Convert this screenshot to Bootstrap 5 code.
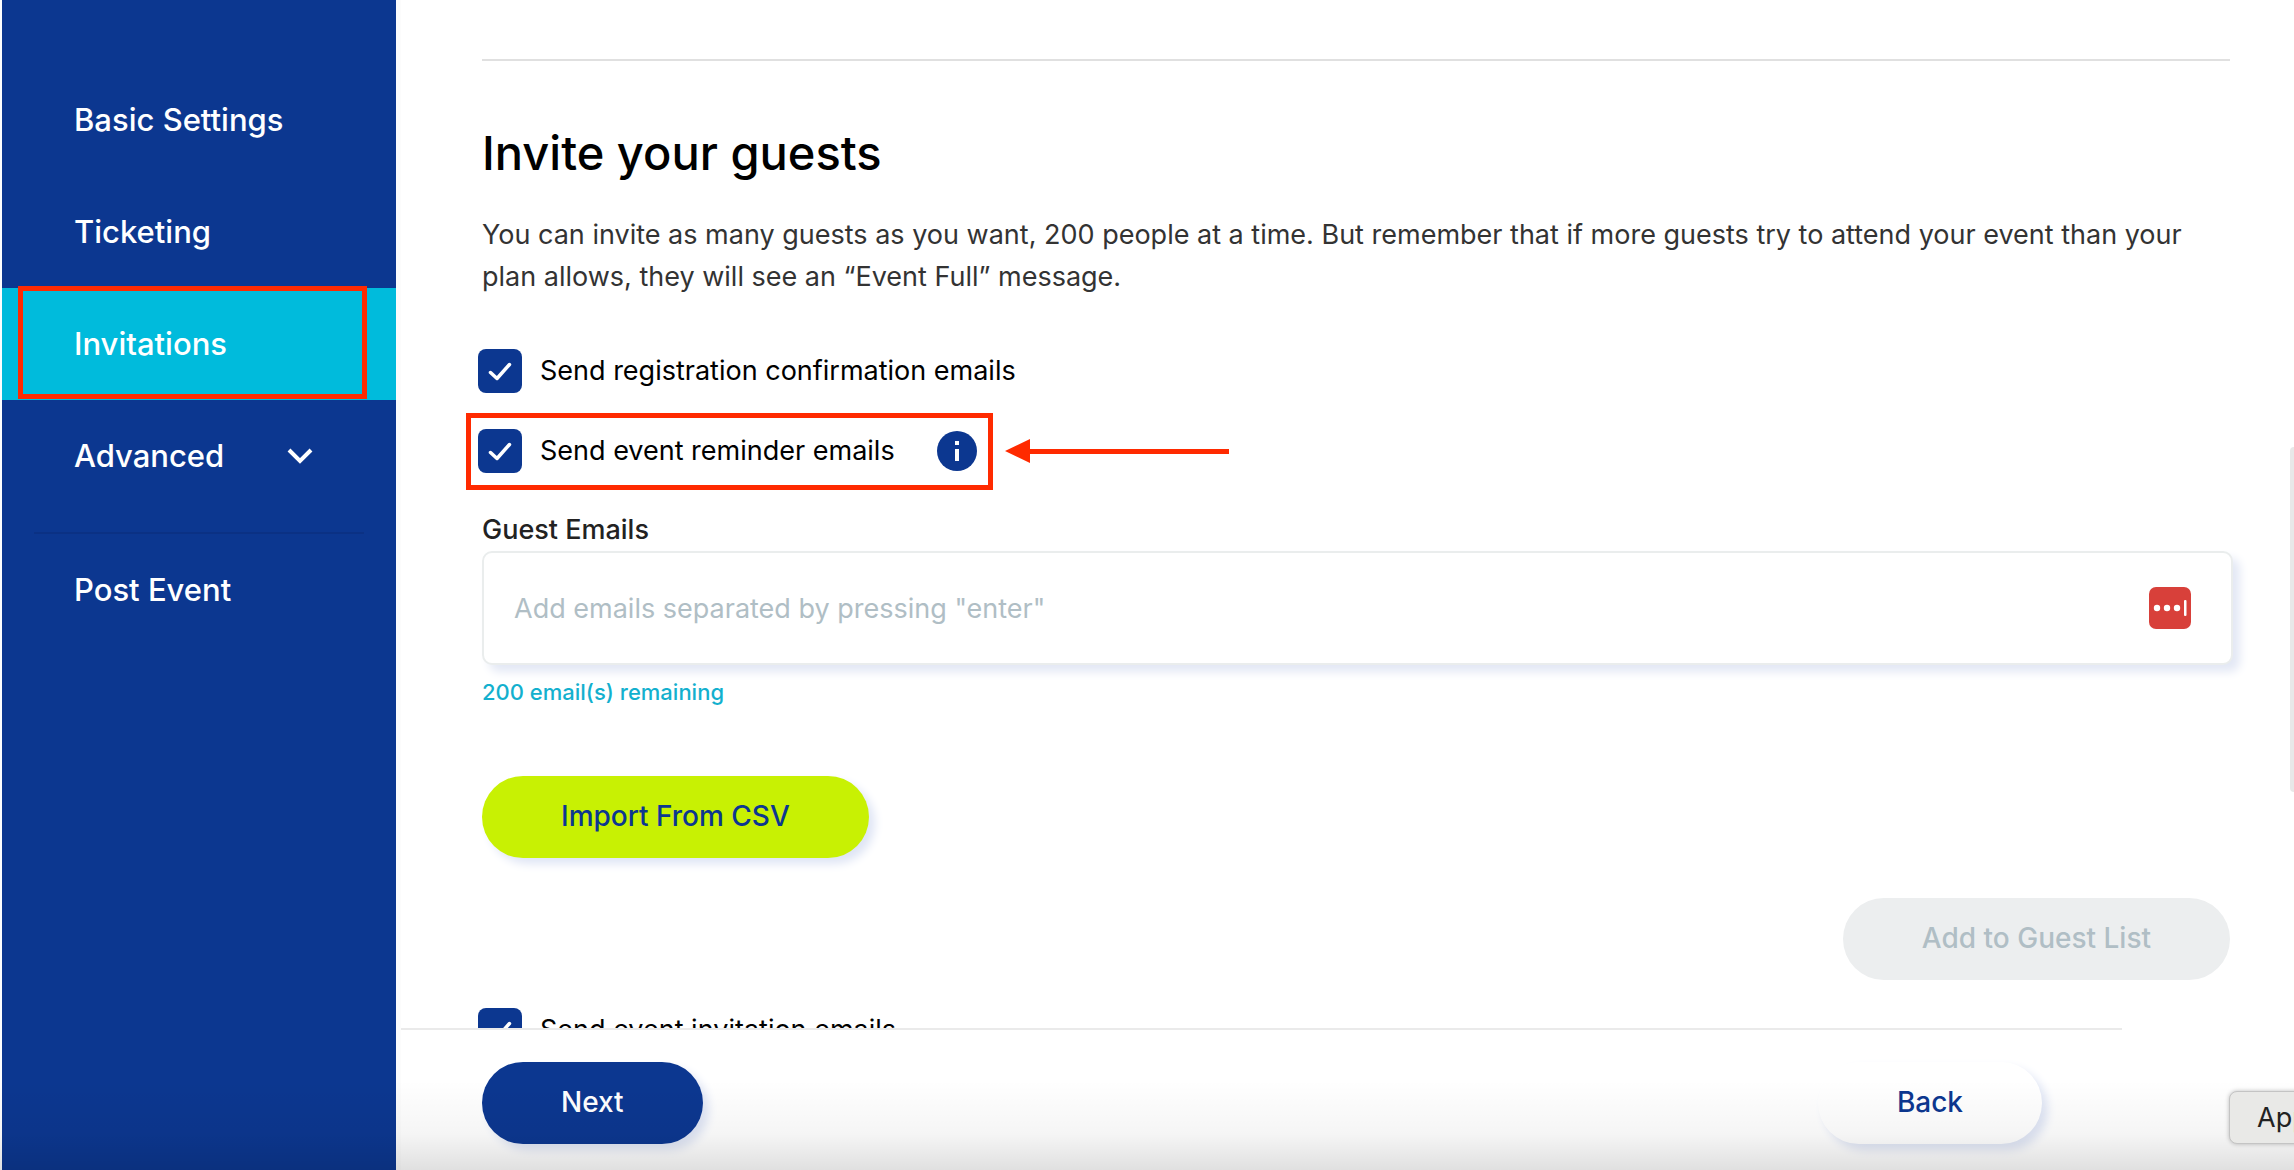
<!DOCTYPE html>
<html lang="en">
<head>
<meta charset="utf-8">
<meta name="viewport" content="width=device-width, initial-scale=1">
<title>Invitations</title>
<link href="https://cdn.jsdelivr.net/npm/bootstrap@5.3.0/dist/css/bootstrap.min.css" rel="stylesheet">
<style>
  :root { --navy: #0c3790; --cyan: #00bbdc; --alert: #ff2a00; }
  body { font-family: Inter, "Open Sans", sans-serif; font-size: 27px; line-height: 42px; color: #000; background: #fff; }
  .side { width: 394px; margin-left: 2px; padding-top: 64px; background: var(--navy); }
  .side-item { height: 112px; padding-left: 72px; color: #fff; font-size: 31px; font-weight: 500; }
  .side-item:hover { color: #fff; }
  .side-item.active { background: var(--cyan); }
  .side-item .chevron { margin-left: 62px; }
  .side-rule { height: 2px; margin: 20px 32px 0; background: #0b3184; }
  .frame { position: absolute; border: 5px solid var(--alert); pointer-events: none; }
  .frame-nav { left: 16px; right: 29px; top: -2px; bottom: 1px; }
  .frame-row { left: -12px; right: -16px; top: -16px; bottom: -17px; }
  .pane { border-left: 5px solid #fcfcfc; }
  .scroller { padding: 59px 64px 0 81px; }
  .top-rule { height: 2px; background: #e0e0e0; }
  .title { margin: 63px 0 32px; font-size: 47px; line-height: 58px; font-weight: 500; }
  .intro { margin-bottom: 51px; color: #333; }
  .tick-row { height: 44px; margin-left: -4px; margin-bottom: 36px; }
  .tick-row .form-check-input { width: 44px; height: 44px; border-radius: 8px; border: 0; }
  .tick-row .form-check-input:checked { background-color: var(--navy);
    background-image: url("data:image/svg+xml,%3Csvg xmlns='http://www.w3.org/2000/svg' viewBox='0 0 44 44'%3E%3Cpath d='M12.500 23.500l6.500 6L31.500 15.500' fill='none' stroke='%23fff' stroke-width='3.500' stroke-linecap='round' stroke-linejoin='round'/%3E%3C/svg%3E"); background-size: 44px; }
  .tick-row label { margin-left: 18px; }
  .info { margin-left: 42px; }
  .arrow { position: absolute; left: 527px; top: 10px; }
  .field-label { line-height: 42px; font-weight: 500; color: #222; }
  .emails { margin-right: -3px; }
  .emails .form-control { height: 114px; padding: 4px 30px; font-size: 27px; border: 2px solid #eaeded; border-radius: 10px; box-shadow: 7px 7px 10px #e3e8f5; }
  .emails .form-control::placeholder { color: #b0bec5; }
  .vault { position: absolute; right: 42px; top: 36px; }
  .remaining { margin: 10px 0 67px; font-size: 22px; line-height: 34px; font-weight: 500; color: #13b0ce; }
  .pill { height: 82px; padding: 0 79px 3px; border: 0; border-radius: 41px; font-size: 28px; font-weight: 500; box-shadow: 6px 6px 10px #dfe5f5; }
  .pill-lime, .pill-lime:hover { background: #c8f103; color: var(--navy); }
  .pill-navy, .pill-navy:hover { background: var(--navy); color: #fff; }
  .pill-plain, .pill-plain:hover { background: #fff; color: var(--navy); }
  .pill-off:disabled { background: #eceeef; color: #b0bec5; opacity: 1; box-shadow: none; }
  .add-row { margin: 40px 0 28px; }
  .foot { height: 142px; padding: 32px 80px 0 81px; margin-right: 172px; border-top: 2px solid #eaeaea; }
  .fade-strip { position: absolute; left: 0; right: 0; bottom: 0; height: 90px; background: linear-gradient(rgba(0,0,0,0), rgba(0,0,0,.04) 60%, rgba(0,0,0,.12)); pointer-events: none; }
  .tip { position: absolute; right: -30px; bottom: 26px; width: 95px; height: 53px; padding-left: 27px; line-height: 52px; font-size: 27px; color: #222; background: #e9e9e7; border: 1px solid #c4c4c4; border-radius: 8px; box-shadow: 0 0 4px rgba(0,0,0,.25); }
  .thumb { position: absolute; right: -4px; top: 447px; width: 8px; height: 345px; border-radius: 5px; background: #e8e8e8; }
</style>
</head>
<body>
<div class="d-flex vh-100 overflow-hidden position-relative">
  <nav class="side flex-shrink-0 d-flex flex-column" aria-label="Event settings">
    <a href="#" class="side-item d-flex align-items-center text-decoration-none">Basic Settings</a>
    <a href="#" class="side-item d-flex align-items-center text-decoration-none">Ticketing</a>
    <a href="#" class="side-item active d-flex align-items-center text-decoration-none position-relative" aria-current="page">Invitations<span class="frame frame-nav"></span></a>
    <a href="#" class="side-item d-flex align-items-center text-decoration-none">Advanced
      <svg class="chevron" width="28" height="20" viewBox="0 0 28 20" fill="none" stroke="#fff" stroke-width="4" aria-hidden="true"><path d="M3 4l11 11L25 4"/></svg>
    </a>
    <div class="side-rule"></div>
    <a href="#" class="side-item d-flex align-items-center text-decoration-none">Post Event</a>
  </nav>

  <div class="pane flex-grow-1 d-flex flex-column">
    <main class="scroller flex-grow-1 overflow-hidden">
      <div class="top-rule"></div>
      <h1 class="title">Invite your guests</h1>
      <p class="intro">You can invite as many guests as you want, 200 people at a time. But remember that if more guests try to attend your event than your plan allows, they will see an “Event Full” message.</p>

      <div class="tick-row d-flex align-items-center">
        <input class="form-check-input m-0" type="checkbox" id="confirm" checked>
        <label for="confirm">Send registration confirmation emails</label>
      </div>
      <div class="d-flex">
        <div class="tick-row d-flex align-items-center position-relative">
          <input class="form-check-input m-0" type="checkbox" id="remind" checked>
          <label for="remind">Send event reminder emails</label>
          <svg class="info" width="40" height="40" viewBox="0 0 40 40" role="img" aria-label="More information"><circle cx="20" cy="20" r="20" fill="#0c3790"/><path d="M18 10h4v4h-4zM18 18h4v12h-4z" fill="#fff"/></svg>
          <span class="frame frame-row"></span>
          <svg class="arrow" width="224" height="24" viewBox="0 0 224 24" fill="#ff2a00" aria-hidden="true"><path d="M0 12L25 0v10h199v5H25v9z"/></svg>
        </div>
      </div>

      <label class="field-label d-block" for="emails">Guest Emails</label>
      <div class="emails position-relative">
        <input class="form-control" type="text" id="emails" placeholder="Add emails separated by pressing &quot;enter&quot;">
        <svg class="vault" width="42" height="42" viewBox="0 0 42 42" aria-hidden="true"><rect width="42" height="42" rx="7" fill="#d8403a"/><g fill="#fff"><circle cx="8" cy="21" r="3.200"/><circle cx="18" cy="21" r="3.200"/><circle cx="28" cy="21" r="3.200"/><rect x="35" y="13" width="2.500" height="16" rx="1"/></g></svg>
      </div>
      <div class="remaining">200 email(s) remaining</div>
      <button type="button" class="btn pill pill-lime">Import From CSV</button>
      <div class="add-row d-flex justify-content-end">
        <button type="button" class="btn pill pill-off" disabled>Add to Guest List</button>
      </div>
      <div class="tick-row d-flex align-items-center">
        <input class="form-check-input m-0" type="checkbox" id="invite" checked>
        <label for="invite">Send event invitation emails</label>
      </div>
    </main>
    <footer class="foot flex-shrink-0 d-flex justify-content-between align-items-start">
      <button type="button" class="btn pill pill-navy">Next</button>
      <button type="button" class="btn pill pill-plain">Back</button>
    </footer>
  </div>

  <div class="fade-strip"></div>
  <div class="tip" role="tooltip">App</div>
  <div class="thumb"></div>
</div>
<script src="https://cdn.jsdelivr.net/npm/bootstrap@5.3.0/dist/js/bootstrap.bundle.min.js"></script>
</body>
</html>
